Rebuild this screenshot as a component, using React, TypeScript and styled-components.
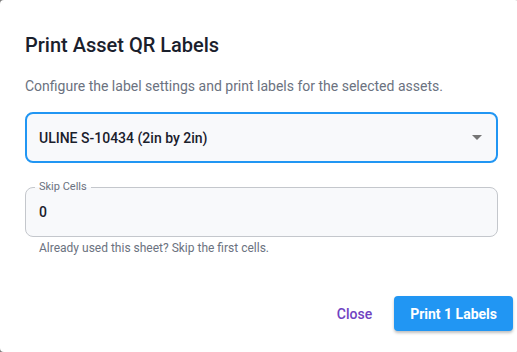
import React, { useState } from "react";
import styled, { createGlobalStyle } from "styled-components";

const GlobalStyle = createGlobalStyle`
  html, body {
    margin: 0;
    padding: 0;
    background: #7d7d7d;
    font-family: Roboto, "Liberation Sans", sans-serif;
  }
  * {
    box-sizing: border-box;
  }
`;

const Dialog = styled.div`
  width: 519px;
  height: 352px;
  background: #fff;
  border-radius: 4px;
  padding: 31px 21px 0 25px;
  display: flex;
  flex-direction: column;
`;

const Title = styled.h2`
  margin: 0;
  font-size: 20px;
  font-weight: 500;
  line-height: 28px;
  color: #1a202c;
`;

const Description = styled.p`
  margin: 17px 0 0;
  font-size: 14px;
  line-height: 20px;
  color: #6b7280;
`;

const SelectBox = styled.div`
  margin-top: 16px;
  height: 51px;
  border: 2px solid #2196f3;
  border-radius: 8px;
  background: #f8f9fb;
  display: flex;
  align-items: center;
  justify-content: space-between;
  padding: 0 14px 0 12px;
  font-size: 14px;
  font-weight: 500;
  color: #1a202c;
`;

const Caret = styled.span`
  width: 0;
  height: 0;
  border-left: 5px solid transparent;
  border-right: 5px solid transparent;
  border-top: 5px solid #757575;
`;

const Field = styled.div`
  position: relative;
  margin-top: 24px;
  height: 50px;
  border: 1px solid #c4c7cc;
  border-radius: 8px;
  background: #f8f9fb;
  padding: 0 13px;
  display: flex;
  align-items: center;
`;

const FieldLabel = styled.span`
  position: absolute;
  top: -8px;
  left: 9px;
  padding: 0 4px;
  font-size: 11px;
  line-height: 14px;
  color: #6b7280;
  background: linear-gradient(to bottom, #fff 50%, #f8f9fb 50%);
`;

const FieldInput = styled.input`
  border: none;
  background: transparent;
  outline: none;
  font-family: inherit;
  font-size: 14px;
  font-weight: 500;
  color: #1a202c;
  width: 100%;
  padding: 0;
  margin-top: -1px;
`;

const Helper = styled.div`
  margin: 3px 0 0 14px;
  font-size: 12px;
  line-height: 16px;
  color: #6b7280;
`;

const Actions = styled.div`
  margin-top: auto;
  margin-bottom: 21px;
  display: flex;
  justify-content: flex-end;
  align-items: center;
  gap: 22px;
  margin-right: -15px;
`;

const TextButton = styled.button`
  border: none;
  background: none;
  font-family: inherit;
  font-size: 14px;
  font-weight: 500;
  color: #6f42c1;
  padding: 8px 0;
  cursor: pointer;
`;

const PrimaryButton = styled.button`
  border: none;
  border-radius: 4px;
  height: 35px;
  padding: 0 16px;
  background: #2196f3;
  color: #fff;
  font-family: inherit;
  font-size: 14px;
  font-weight: 700;
  box-shadow: 0 2px 3px rgba(0, 0, 0, 0.25);
  cursor: pointer;
`;

export default function App() {
  const [skip, setSkip] = useState("0");
  return (
    <>
      <GlobalStyle />
      <Dialog>
        <Title>Print Asset QR Labels</Title>
        <Description>
          Configure the label settings and print labels for the selected assets.
        </Description>
        <SelectBox>
          <span>ULINE S-10434 (2in by 2in)</span>
          <Caret />
        </SelectBox>
        <Field>
          <FieldLabel>Skip Cells</FieldLabel>
          <FieldInput value={skip} onChange={(e) => setSkip(e.target.value)} />
        </Field>
        <Helper>Already used this sheet? Skip the first cells.</Helper>
        <Actions>
          <TextButton>Close</TextButton>
          <PrimaryButton>Print 1 Labels</PrimaryButton>
        </Actions>
      </Dialog>
    </>
  );
}
